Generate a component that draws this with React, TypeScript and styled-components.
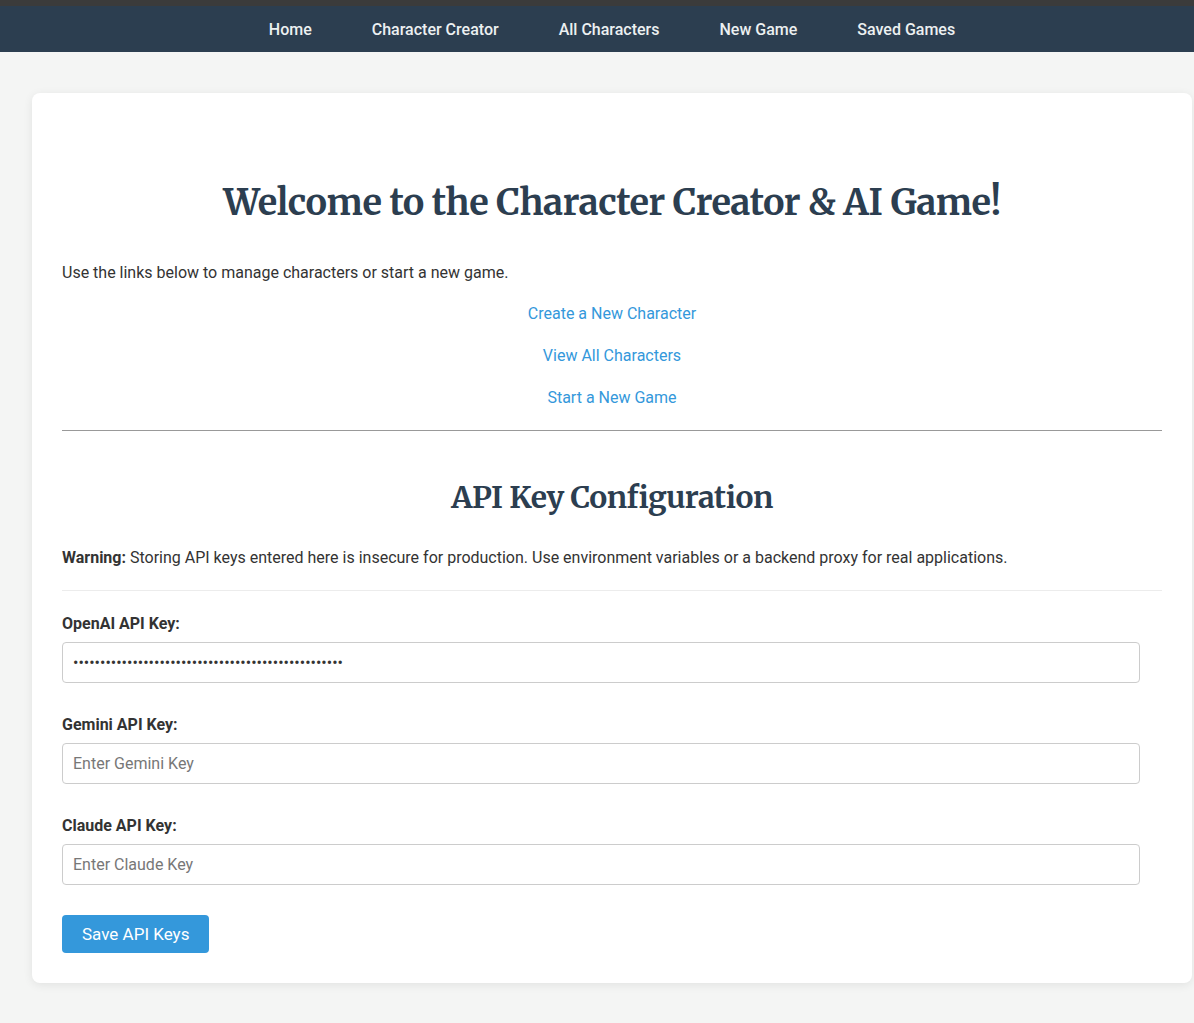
import { useState } from "react";
import styled, { createGlobalStyle } from "styled-components";

const GlobalStyle = createGlobalStyle`
  html, body {
    margin: 0;
    padding: 0;
    overflow-x: hidden;
    background-color: #f4f5f4;
    font-family: Roboto, "Liberation Sans", Arial, sans-serif;
    color: #333;
  }
  * {
    box-sizing: border-box;
  }
`;

const Page = styled.div`
  width: 1224px;
  min-height: 1023px;
  border-top: 6px solid #3b3b3b;
`;

const NavBar = styled.nav`
  height: 46px;
  background-color: #2c3e50;
  display: flex;
  justify-content: center;
  align-items: center;
  gap: 60px;
`;

const NavLink = styled.a`
  color: #ecf0f1;
  font-size: 16px;
  font-weight: 500;
  text-decoration: none;
  cursor: pointer;
`;

const Main = styled.main`
  padding: 41px 32px 40px;
`;

const Card = styled.section`
  background-color: #fff;
  border-radius: 8px;
  box-shadow: 0 2px 10px rgba(0, 0, 0, 0.08);
  padding: 87px 30px 30px;
`;

const Title = styled.h1<{ $size: number }>`
  font-family: Merriweather, "DejaVu Serif", "Liberation Serif", serif;
  font-size: ${(p) => p.$size}px;
  font-weight: 700;
  color: #2c3e50;
  text-align: center;
  margin: 0;
  letter-spacing: -0.45px;
`;

const Intro = styled.p`
  font-size: 16px;
  margin: 38px 0 22px;
`;

const LinkList = styled.div`
  display: flex;
  flex-direction: column;
  align-items: center;
  gap: 23px;
`;

const TextLink = styled.a`
  color: #3498db;
  font-size: 16px;
  text-decoration: none;
  cursor: pointer;
`;

const Divider = styled.hr<{ $light?: boolean }>`
  border: none;
  border-top: 1px solid ${(p) => (p.$light ? "#ececec" : "#999")};
  margin: ${(p) => (p.$light ? "23px 0 23px" : "23px 0 47px")};
`;

const Warning = styled.p`
  font-size: 16px;
  margin: 32px 0 0;
`;

const FormGroup = styled.div`
  margin-bottom: 32px;

  &:last-of-type {
    margin-bottom: 30px;
  }
`;

const Label = styled.label`
  display: block;
  font-size: 16px;
  font-weight: 700;
  margin-bottom: 9px;
`;

const Input = styled.input`
  display: block;
  width: calc(100% - 22px);
  height: 41px;
  padding: 10px;
  font-size: 16px;
  font-family: Roboto, "Liberation Sans", Arial, sans-serif;
  color: #333;
  border: 1px solid #ccc;
  border-radius: 4px;

  &::placeholder {
    color: #777;
  }
`;

const SaveButton = styled.button`
  background-color: #3498db;
  color: #fff;
  border: none;
  border-radius: 4px;
  height: 38px;
  padding: 0 20px;
  font-size: 17px;
  font-family: Roboto, "Liberation Sans", Arial, sans-serif;
  cursor: pointer;
`;

function App() {
  const [openai, setOpenai] = useState("sk-proj-xxxxxxxxxxxxxxxxxxxxxxxxxxxxxxxxxxxxxxxxxx");
  const [gemini, setGemini] = useState("");
  const [claude, setClaude] = useState("");

  const navItems = ["Home", "Character Creator", "All Characters", "New Game", "Saved Games"];

  return (
    <Page>
      <GlobalStyle />
      <NavBar>
        {navItems.map((item) => (
          <NavLink key={item}>{item}</NavLink>
        ))}
      </NavBar>
      <Main>
        <Card>
          <Title $size={36}>Welcome to the Character Creator &amp; AI Game!</Title>
          <Intro>Use the links below to manage characters or start a new game.</Intro>
          <LinkList>
            <TextLink>Create a New Character</TextLink>
            <TextLink>View All Characters</TextLink>
            <TextLink>Start a New Game</TextLink>
          </LinkList>
          <Divider />
          <Title $size={30}>API Key Configuration</Title>
          <Warning>
            <strong>Warning:</strong> Storing API keys entered here is insecure for production. Use
            environment variables or a backend proxy for real applications.
          </Warning>
          <Divider $light />
          <FormGroup>
            <Label htmlFor="openai">OpenAI API Key:</Label>
            <Input
              id="openai"
              type="password"
              value={openai}
              onChange={(e) => setOpenai(e.target.value)}
            />
          </FormGroup>
          <FormGroup>
            <Label htmlFor="gemini">Gemini API Key:</Label>
            <Input
              id="gemini"
              type="password"
              placeholder="Enter Gemini Key"
              value={gemini}
              onChange={(e) => setGemini(e.target.value)}
            />
          </FormGroup>
          <FormGroup>
            <Label htmlFor="claude">Claude API Key:</Label>
            <Input
              id="claude"
              type="password"
              placeholder="Enter Claude Key"
              value={claude}
              onChange={(e) => setClaude(e.target.value)}
            />
          </FormGroup>
          <SaveButton>Save API Keys</SaveButton>
        </Card>
      </Main>
    </Page>
  );
}

export default App;
